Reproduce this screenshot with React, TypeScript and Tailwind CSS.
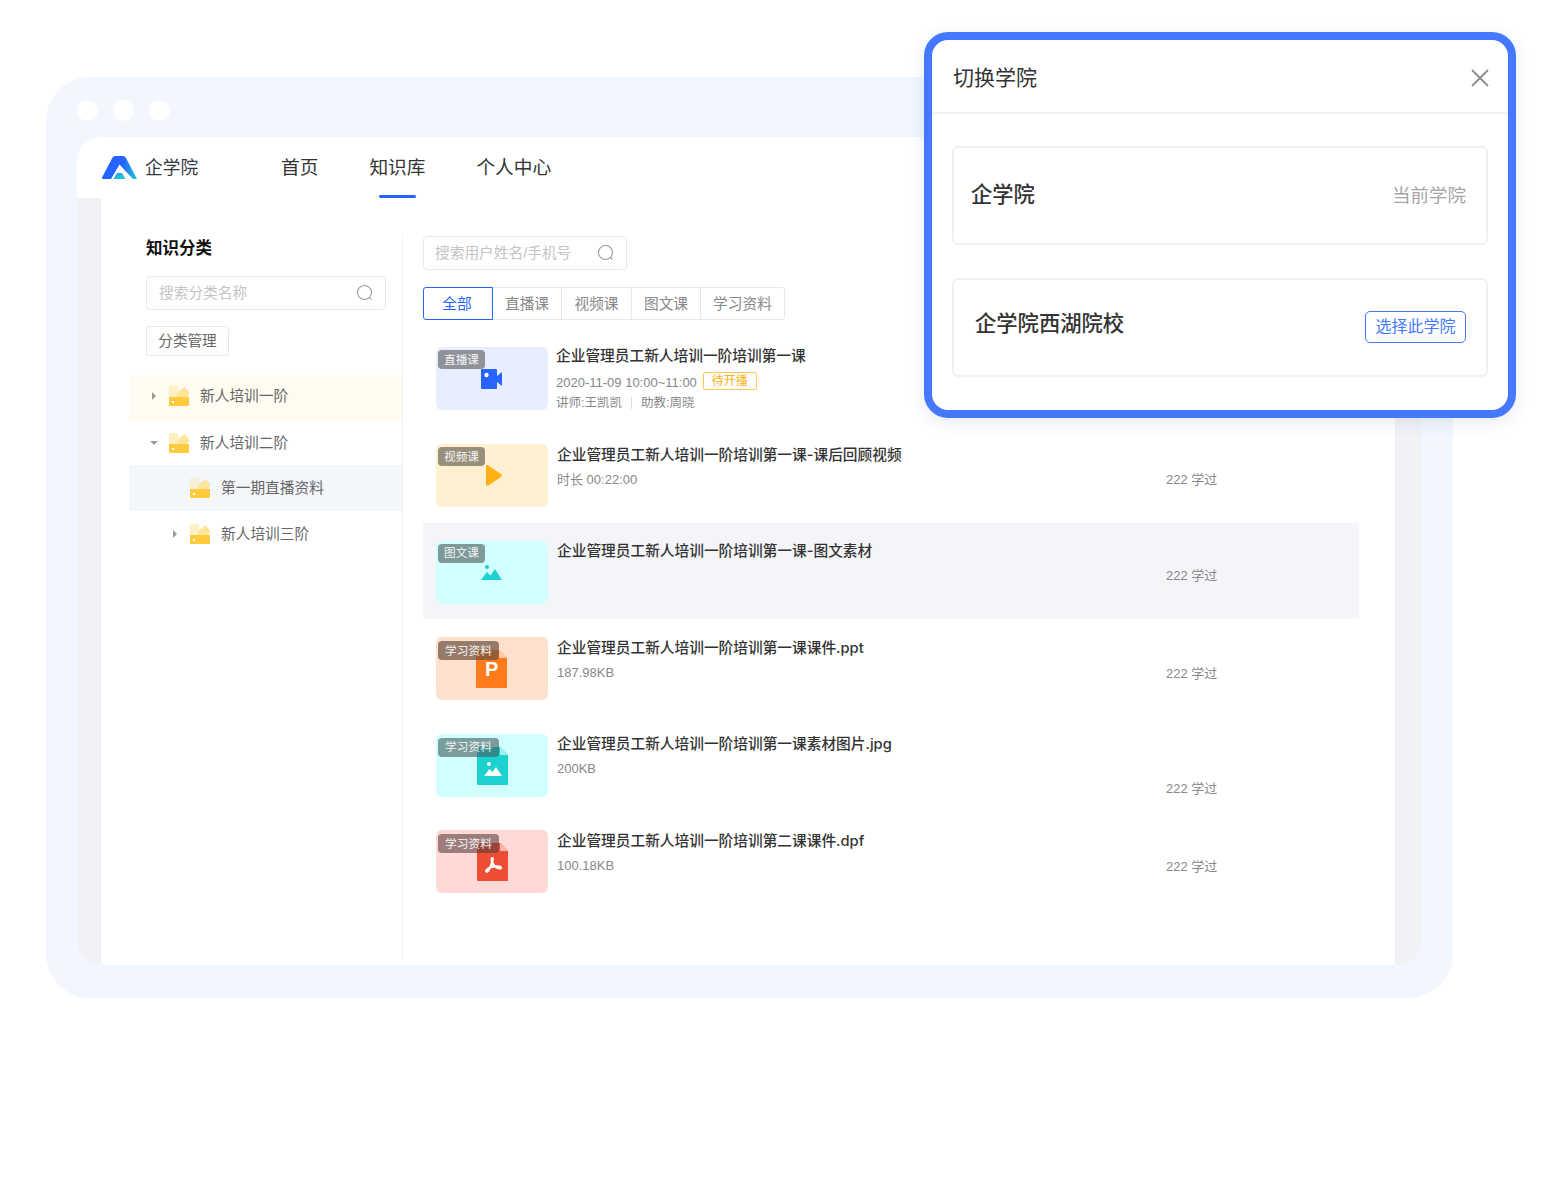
import React from "react";

const tabs = [
  { label: "全部", w: "w-[70px]", active: true },
  { label: "直播课", w: "w-[70px]" },
  { label: "视频课", w: "w-[71px]" },
  { label: "图文课", w: "w-[70px]" },
  { label: "学习资料", w: "w-[85px]" },
];

function Search({ className, text, iconClass }: { className: string; text: string; iconClass: string }) {
  return (
    <div className={`flex items-center justify-between rounded-[4px] border border-[#e8e8e8] bg-white text-[14.7px] text-[#c4c4c4] ${className}`}>
      <span>{text}</span>
      <svg className={iconClass} width="18" height="18" viewBox="0 0 18 18" fill="none" stroke="#9a9a9a" strokeWidth="1.1">
        <circle cx="8.5" cy="8.5" r="7" />
        <path d="M13.5 13.7l2 2" />
      </svg>
    </div>
  );
}

function Folder({ muted }: { muted?: boolean }) {
  return (
    <svg width="21" height="20" viewBox="0 0 21 20" className="shrink-0">
      <path d="M0 0h9v11H0z" fill={muted ? "#f7efd4" : "#fff0c4"} />
      <path d="M8 7l7.500-6 5 6-2 4H8z" fill={muted ? "#fce3a0" : "#ffe49a"} />
      <path d="M0 11h20v8a1 1 0 0 1-1 1H1a1 1 0 0 1-1-1z" fill="#ffcb3d" />
      <rect x="3" y="15" width="2" height="2" fill="#fff" />
    </svg>
  );
}

function Arrow({ open }: { open?: boolean }) {
  return (
    <svg width="10" height="10" viewBox="0 0 10 10" className="shrink-0" fill="#9b9b9b">
      {open ? <path d="M1 3h8L5 7z" /> : <path d="M3 1l4 4-4 4z" />}
    </svg>
  );
}

function TreeRow({
  label,
  className,
  open,
  noArrow,
  muted,
}: {
  label: string;
  className: string;
  open?: boolean;
  noArrow?: boolean;
  muted?: boolean;
}) {
  return (
    <div className={`flex items-center text-[14.7px] text-[#666] ${className}`}>
      {noArrow ? <span className="w-[10px]" /> : <Arrow open={open} />}
      <span className="ml-[10px]">
        <Folder muted={muted} />
      </span>
      <span className="ml-[10px]">{label}</span>
    </div>
  );
}

function VideoIcon() {
  return (
    <svg className="absolute left-[45px] top-[22px]" width="21" height="20" viewBox="0 0 21 20">
      <path d="M1 0h14a1 1 0 0 1 1 1v18a1 1 0 0 1-1 1H1a1 1 0 0 1-1-1V1a1 1 0 0 1 1-1z" fill="#2663ff" />
      <path d="M16 7l5-4v14l-5-4z" fill="#2663ff" />
      <circle cx="5.500" cy="6" r="2.200" fill="#fff" />
    </svg>
  );
}

function PlayIcon() {
  return (
    <svg className="absolute left-[50px] top-[21px]" width="16" height="21" viewBox="0 0 16 21">
      <path d="M0 1.500C0 .3 1.300-.4 2.300.400l13 8.800c.8.6.8 1.900 0 2.500l-13 8.800C1.300 21.300 0 20.600 0 19.400z" fill="#ffb014" />
    </svg>
  );
}

function PicIcon() {
  return (
    <svg className="absolute left-[45px] top-[24px]" width="21" height="15" viewBox="0 0 21 15">
      <circle cx="6" cy="2" r="2" fill="#1dd1cf" />
      <path d="M0 15l6-8 3.500 3.500L14 4l7 11z" fill="#1dd1cf" />
    </svg>
  );
}

function FileIcon({ color, fold, className, children }: { color: string; fold: string; className: string; children: React.ReactNode }) {
  return (
    <svg className={`absolute top-[13px] ${className}`} width="31" height="38" viewBox="0 0 31 38">
      <path d="M1 0h22l8 8v29a1 1 0 0 1-1 1H1a1 1 0 0 1-1-1V1a1 1 0 0 1 1-1z" fill={color} />
      <path d="M23 0l8 8h-8z" fill={fold} />
      {children}
    </svg>
  );
}

const rows = [
  { title: "企业管理员工新人培训一阶培训第一课", thumb: "bg-[#e8eeff]", badge: "直播课", badgeBg: "bg-[#90929a]", wide: false, icon: <VideoIcon />, live: true, top: "-ml-px", learn: "" },
  { title: "企业管理员工新人培训一阶培训第一课-课后回顾视频", thumb: "bg-[#fff0d1]", badge: "视频课", badgeBg: "bg-[#998f7d]", wide: false, icon: <PlayIcon />, meta: "时长 00:22:00", top: "pt-[1px]", learn: "mt-[5px]" },
  { title: "企业管理员工新人培训一阶培训第一课-图文素材", thumb: "bg-[#d1ffff]", badge: "图文课", badgeBg: "bg-[#7d9999]", wide: false, icon: <PicIcon />, hl: true, top: "pt-[0.500px]", learn: "mt-[5px]" },
  {
    title: "企业管理员工新人培训一阶培训第一课课件.ppt",
    thumb: "bg-[#ffe0cc]",
    badge: "学习资料",
    badgeBg: "bg-[#6b5040]/70",
    wide: true,
    icon: (
      <FileIcon color="#ff7a1a" fold="#ffc9a3" className="left-[40px]">
        <text x="9" y="26" fontSize="20" fontWeight="700" fill="#fff" fontFamily="Liberation Sans, sans-serif">P</text>
      </FileIcon>
    ),
    meta: "187.98KB",
    top: "pt-[0.500px]",
    learn: "mt-[6px]",
  },
  {
    title: "企业管理员工新人培训一阶培训第一课素材图片.jpg",
    thumb: "bg-[#d1ffff]",
    badge: "学习资料",
    badgeBg: "bg-[#405a5a]/60",
    wide: true,
    icon: (
      <FileIcon color="#1dd1cf" fold="#a5efee" className="left-[41px]">
        <circle cx="12" cy="17" r="2" fill="#fff" />
        <path d="M7 29l5.500-7 3 3 3.500-5 6 9z" fill="#fff" />
      </FileIcon>
    ),
    meta: "200KB",
    top: "pt-[0.500px]",
    learn: "mt-[25px]",
  },
  {
    title: "企业管理员工新人培训一阶培训第二课课件.dpf",
    thumb: "bg-[#ffd9d6]",
    badge: "学习资料",
    badgeBg: "bg-[#5a4040]/60",
    wide: true,
    icon: (
      <FileIcon color="#ee4c33" fold="#f9b5a8" className="left-[41px]">
        <path d="M15.500 15c-1.500 0-1 3 0 5s3 4.500 7 5.500c2 .4 2.200-1.800 0-2-4-.3-10 .5-13 3.500-1.200 1.300.5 2.500 1.500 1 1.500-2 3.500-6 4.500-10 .4-1.800.5-3-.000-3z" fill="none" stroke="#fff" strokeWidth="2.200" />
      </FileIcon>
    ),
    meta: "100.18KB",
    top: "pt-[0.500px]",
    learn: "mt-[6px]",
  },
];

export default function App() {
  return (
    <div className="relative h-[1200px] w-[1548px] bg-white font-['Liberation_Sans','Noto_Sans_CJK_SC',sans-serif]">
      <div className="pl-[46px] pt-[77px]">
        {/* browser frame */}
        <div className="h-[921px] w-[1407px] rounded-[44px] bg-[#f1f6ff] pb-[33px] pl-[31px] pr-[32px]">
          <div className="flex h-[60px] gap-[15px] pt-[23px]">
            <span className="h-[21px] w-[21px] rounded-full bg-white" />
            <span className="h-[21px] w-[21px] rounded-full bg-white" />
            <span className="h-[21px] w-[21px] rounded-full bg-white" />
          </div>

          <div className="flex h-[828px] flex-col overflow-hidden rounded-[24px] bg-[#f1f2f6]">
            {/* top nav */}
            <header className="flex h-[61px] shrink-0 bg-white pl-[25px]">
              <div className="flex w-[179px] items-center gap-2">
                <svg width="35" height="23" viewBox="0 0 35 23">
                  <defs>
                    <linearGradient id="logoEdge" x1="0" y1="0" x2="1" y2="0">
                      <stop offset="0.62" stopColor="#2663ff" />
                      <stop offset="1" stopColor="#1dd1cf" />
                    </linearGradient>
                    <linearGradient id="logoCore" x1="0" y1="0" x2="1" y2="1">
                      <stop offset="0.2" stopColor="#2a9cf0" />
                      <stop offset="0.8" stopColor="#1dd1cf" />
                    </linearGradient>
                  </defs>
                  <path d="M1 23a1 1 0 0 1-1-1.500L10.500 1.500Q11.500 0 13 0h8q2 0 3 2l11 21h-4L17.500 8.500 9 23z" fill="url(#logoEdge)" />
                  <path d="M11.500 23l3.500-6h5l3.500 6z" fill="url(#logoCore)" />
                </svg>
                <span className="pt-[2px] text-[17.700px] text-[#333a45]">企学院</span>
              </div>
              <nav className="flex h-full items-center gap-[51px] pt-[2px] text-[18.700px] text-[#333]">
                <span>首页</span>
                <span className="relative">
                  知识库
                  <span className="absolute bottom-[-15px] left-[10px] h-[3px] w-[37px] rounded-full bg-[#2663ff]" />
                </span>
                <span>个人中心</span>
              </nav>
            </header>

            <div className="flex flex-1 px-[24px] pr-[26px]">
              <div className="flex flex-1 bg-white pt-[38px]">
                {/* sidebar */}
                <aside className="mb-[5px] w-[302px] shrink-0 border-r border-[#f3f3f3] pl-[28px]">
                  <h2 className="pl-[17px] text-[16.500px] font-semibold leading-6 text-[#111]">知识分类</h2>
                  <Search className="ml-[17px] mt-[16px] h-[34px] w-[240px] pl-3" text="搜索分类名称" iconClass="mr-[11px]" />
                  <div className="ml-[17px] mt-[16px] flex h-[30px] w-[83px] items-center justify-center rounded-[3px] border border-[#e8e8e8] pt-[2px] text-[14.600px] text-[#666]">
                    分类管理
                  </div>
                  <div className="mt-[19px]">
                    <TreeRow label="新人培训一阶" className="h-[46px] bg-[#fffbf1] pb-1 pl-[20px]" />
                    <TreeRow label="新人培训二阶" className="h-[44px] pl-[20px]" open />
                    <TreeRow label="第一期直播资料" className="h-[46px] bg-[#f3f6fb] pl-[41px]" noArrow muted />
                    <TreeRow label="新人培训三阶" className="h-[46px] pl-[41px]" />
                  </div>
                </aside>

                {/* content */}
                <main className="flex-1 pl-[20px]">
                  <Search className="h-[34px] w-[204px] pl-[11px]" text="搜索用户姓名/手机号" iconClass="mr-[11px]" />
                  <div className="mt-[17px] flex h-[33px]">
                    {tabs.map((t) => (
                      <div
                        key={t.label}
                        className={`flex items-center justify-center border pt-[2px] text-[14.700px] ${t.w} ${
                          t.active
                            ? "z-10 rounded-l-[3px] border-[#2663ff] pr-[2px] text-[#2663ff]"
                            : "-ml-px border-[#e8e8e8] text-[#888] last:rounded-r-[3px]"
                        }`}
                      >
                        {t.label}
                      </div>
                    ))}
                  </div>
                  <div className="mt-[9.400px] w-[936px]">
                    {rows.map((r) => (
                      <div key={r.title} className={`flex h-[96.600px] gap-[9px] px-[13px] pt-[18px] ${r.hl ? "bg-[#f4f5f9]" : ""}`}>
                        <div className={`relative h-[63px] w-[112px] shrink-0 rounded-[6px] ${r.thumb}`}>
                          {r.icon}
                          <span
                            className={`absolute left-[2px] flex h-[19px] items-center justify-center rounded-[4px] text-[11.700px] text-[#f4f4f4] ${r.badgeBg} ${
                              r.wide ? "top-[4px] w-[61px]" : "top-[3px] w-[47px]"
                            }`}
                          >
                            {r.badge}
                          </span>
                        </div>
                        <div className={`min-w-0 flex-1 ${r.top}`}>
                          <div
                            className={`font-['Inter','Noto_Sans_CJK_SC',sans-serif] text-[14.700px] font-medium leading-[20px] text-[#333] ${
                              r.live ? "-translate-y-px" : ""
                            }`}
                          >
                            {r.title}
                          </div>
                          {r.live && (
                            <>
                              <div className="mt-[5px] flex h-[20px] items-center text-[13px] text-[#888]">
                                2020-11-09 10:00~11:00
                                <span className="mb-[2px] ml-[6px] flex h-[18px] w-[54px] items-center justify-center rounded-[2px] border border-[#ffc850] text-[12px] text-[#ffb014]">
                                  待开播
                                </span>
                              </div>
                              <div className="mt-[1px] flex h-[20px] items-center text-[12.500px] text-[#888]">
                                讲师:王凯凯
                                <span className="mx-[9px] h-[12px] w-px bg-[#ddd]" />
                                助教:周晓
                              </div>
                            </>
                          )}
                          {!r.live && (
                            <div className="flex">
                              <div className="mt-[5px] h-[20px] w-[609px] text-[13px] leading-[20px] text-[#888]">{r.meta}</div>
                              <div className={`text-[13px] leading-[20px] text-[#888] ${r.learn}`}>222 学过</div>
                            </div>
                          )}
                        </div>
                      </div>
                    ))}
                  </div>
                </main>
              </div>
            </div>
          </div>
        </div>
      </div>

      {/* switch academy popup */}
      <div className="absolute left-[924px] top-[32px] h-[386px] w-[592px] rounded-[24px] border-[8px] border-[#4479ff] bg-white shadow-[0_4px_16px_rgba(40,80,180,0.12)]">
        <div className="flex h-[74px] items-center justify-between border-b-2 border-[#f0f0f0] pl-[21px] pr-[18px] pt-[3px]">
          <span className="text-[21px] text-[#333]">切换学院</span>
          <svg width="20" height="20" viewBox="0 0 20 20" stroke="#8c8c8c" strokeWidth="1.800">
            <path d="M2 2l16 16M18 2L2 18" />
          </svg>
        </div>
        <div className="flex flex-col gap-[33px] px-[20px] pt-[32px]">
          <div className="flex h-[99px] items-center justify-between rounded-[6px] border-2 border-[#f0f0f0] pl-[17px] pr-[20px]">
            <span className="text-[21.300px] font-medium text-[#333]">企学院</span>
            <span className="text-[18.500px] text-[#a6a6a6]">当前学院</span>
          </div>
          <div className="flex h-[99px] items-center justify-between rounded-[6px] border-2 border-[#f0f0f0] pl-[21px] pr-[20px]">
            <span className="pb-[6px] text-[21.300px] font-medium text-[#333]">企学院西湖院校</span>
            <span className="mb-[2px] flex h-[32px] w-[101px] items-center justify-center rounded-[5px] border border-[#4479ff] text-[16px] text-[#4479ff]">
              选择此学院
            </span>
          </div>
        </div>
      </div>
    </div>
  );
}
